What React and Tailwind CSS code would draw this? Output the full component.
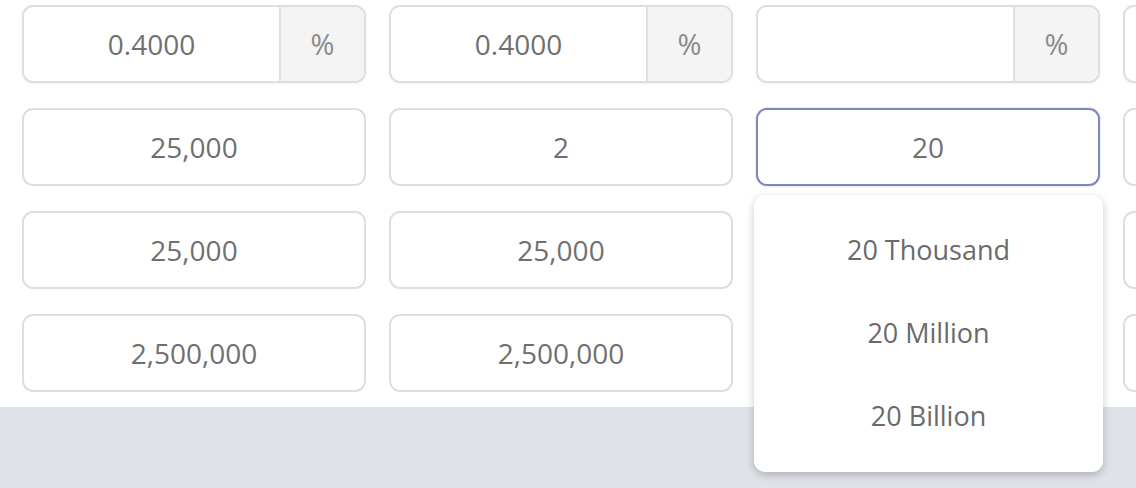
import React from 'react';

const font = { fontFamily: '"Open Sans", "Noto Sans", sans-serif' };

const rows = [
  ['', '0.4000', '0.4000', '', ''],
  ['', '25,000', '2', '20', ''],
  ['', '25,000', '25,000', '', ''],
  ['', '2,500,000', '2,500,000', '', ''],
];

// first and last columns are only slivers at the edges
const PercentInput = ({ value, edge }) => (
  <div className="flex h-[78px] w-[344px] shrink-0 overflow-hidden rounded-[11px] border-2 border-[#dedede] bg-white shadow-[0_1px_3px_rgba(0,0,0,0.05)]">
    <div className="flex flex-1 items-center justify-center text-[28px] text-[#707070]">{value}</div>
    <div className="flex w-[85px] items-center justify-center border-l-2 border-[#e0e0e0] bg-[#f4f4f4] text-[29px] text-[#8a8a8a]">
      {edge ? '' : '%'}
    </div>
  </div>
);

const PlainInput = ({ value, focused }) => (
  <div
    className={`flex h-[78px] w-[344px] shrink-0 items-center justify-center rounded-[11px] border-2 bg-white text-[28px] text-[#707070] ${
      focused ? 'border-[#7f87bf] shadow-[0_0_0_1px_rgba(120,130,200,0.15)]' : 'border-[#dedede]'
    }`}
  >
    {value}
  </div>
);

const Dropdown = () => (
  <div className="absolute left-[-2px] top-[87px] z-10 w-[349px] rounded-[11px] bg-white py-[14px] shadow-[0_3px_8px_rgba(0,0,0,0.22)]">
    {['20 Thousand', '20 Million', '20 Billion'].map((item) => (
      <div key={item} className="flex h-[83px] items-center justify-center text-[27px] text-[#6a6a6a]">
        {item}
      </div>
    ))}
  </div>
);

export default function App() {
  return (
    <div className="h-[488px] w-[1136px] overflow-hidden bg-white" style={font}>
      <div className="flex h-[407px] flex-col gap-[25px] pt-[5px]">
        {rows.map((row, r) => (
          <div key={r} className="ml-[-345px] flex gap-[23px]">
            {row.map((value, c) => {
              const edge = c === 0 || c === 4;
              if (r === 0) return <PercentInput key={c} value={value} edge={edge} />;
              if (r === 1 && c === 3) {
                return (
                  <div key={c} className="relative">
                    <PlainInput value={value} focused />
                    <Dropdown />
                  </div>
                );
              }
              return <PlainInput key={c} value={value} />;
            })}
          </div>
        ))}
      </div>
      <div className="h-[81px] bg-[#dfe2e6]" />
    </div>
  );
}
